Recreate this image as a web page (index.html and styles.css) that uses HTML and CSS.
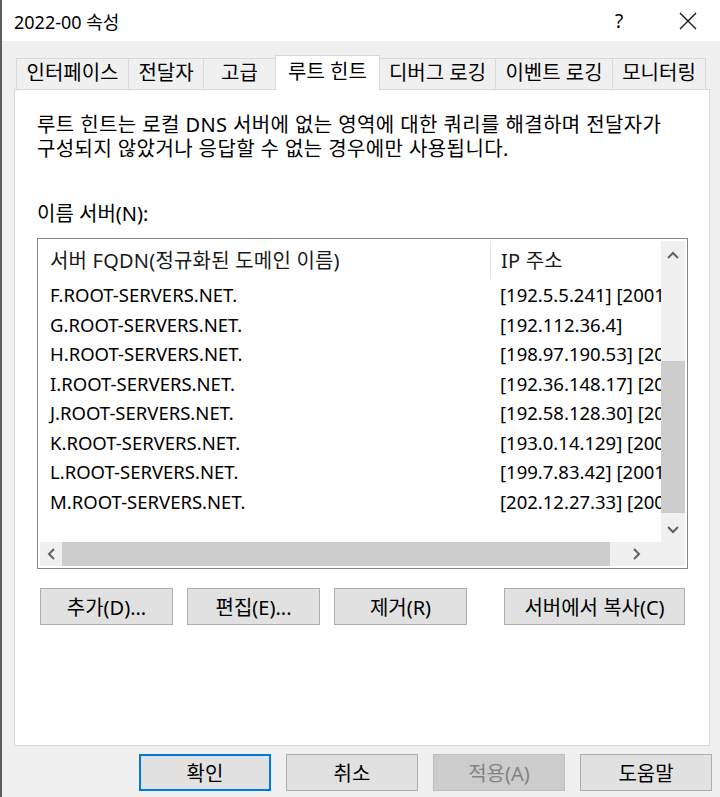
FILE: index.html
```html
<!DOCTYPE html>
<html lang="ko">
<head>
  <meta charset="UTF-8" />
  <title>2022-00 속성</title>
  <link rel="stylesheet" href="styles.css">
</head>
<body>
<header class="titlebar">
  <span class="title">2022-00 속성</span>
  <span class="help">?</span>
  <span class="close">
    <svg width="18" height="18" viewBox="0 0 18 18"><path d="M1 1 L17 17 M17 1 L1 17" stroke="#111" stroke-width="1.3" fill="none"/></svg>
  </span>
</header>
<div class="content">
  <nav class="tabs">
    <div class="tab" style="width:113px">인터페이스</div>
    <div class="tab" style="width:76px">전달자</div>
    <div class="tab" style="width:73px">고급</div>
    <div class="tab active" style="width:105px">루트 힌트</div>
    <div class="tab" style="width:117px">디버그 로깅</div>
    <div class="tab" style="width:118px">이벤트 로깅</div>
    <div class="tab" style="width:94px">모니터링</div>
  </nav>
  <section class="panel">
    <p class="desc">루트 힌트는 로컬 DNS 서버에 없는 영역에 대한 쿼리를 해결하며 전달자가<br>구성되지 않았거나 응답할 수 없는 경우에만 사용됩니다.</p>
    <div class="label">이름 서버(N):</div>
    <div class="listbox">
      <div class="list-view">
        <div class="list-head">
          <div class="col-name">서버 FQDN(정규화된 도메인 이름)</div>
          <div class="col-ip">IP 주소</div>
        </div>
        <div id="rows"></div>
      </div>
      <div class="vscroll">
        <svg class="arrow" width="12" height="8" viewBox="0 0 12 8"><path d="M1 7 L6 2 L11 7" stroke="#606060" stroke-width="2" fill="none"/></svg>
        <div class="vthumb"></div>
        <svg class="arrow down" width="12" height="8" viewBox="0 0 12 8"><path d="M1 1 L6 6 L11 1" stroke="#606060" stroke-width="2" fill="none"/></svg>
      </div>
      <div class="hscroll">
        <svg class="harrow" width="8" height="12" viewBox="0 0 8 12"><path d="M7 1 L2 6 L7 11" stroke="#606060" stroke-width="2" fill="none"/></svg>
        <div class="hthumb"></div>
        <svg class="harrow right" width="8" height="12" viewBox="0 0 8 12"><path d="M1 1 L6 6 L1 11" stroke="#606060" stroke-width="2" fill="none"/></svg>
      </div>
      <div class="corner"></div>
    </div>
    <div class="list-buttons">
      <button class="btn">추가(D)...</button>
      <button class="btn">편집(E)...</button>
      <button class="btn">제거(R)</button>
      <button class="btn wide">서버에서 복사(C)</button>
    </div>
  </section>
  <div class="dialog-buttons">
    <button class="btn default">확인</button>
    <button class="btn">취소</button>
    <button class="btn" disabled>적용(A)</button>
    <button class="btn">도움말</button>
  </div>
</div>
<script>
  const servidores = [
    ["F.ROOT-SERVERS.NET.", "[192.5.5.241] [2001:500:2f::f]"],
    ["G.ROOT-SERVERS.NET.", "[192.112.36.4]"],
    ["H.ROOT-SERVERS.NET.", "[198.97.190.53] [2001:500:1::53]"],
    ["I.ROOT-SERVERS.NET.", "[192.36.148.17] [2001:7fe::53]"],
    ["J.ROOT-SERVERS.NET.", "[192.58.128.30] [2001:503:c27::2:30]"],
    ["K.ROOT-SERVERS.NET.", "[193.0.14.129] [2001:7fd::1]"],
    ["L.ROOT-SERVERS.NET.", "[199.7.83.42] [2001:500:9f::42]"],
    ["M.ROOT-SERVERS.NET.", "[202.12.27.33] [2001:dc3::35]"]
  ];
  const lista = document.getElementById("rows");
  servidores.forEach(s => {
    const div = document.createElement("div");
    div.className = "row";
    div.innerHTML = `<div class="col-name">${s[0]}</div><div class="col-ip">${s[1]}</div>`;
    lista.appendChild(div);
  });
</script>
</body>
</html>
```

FILE: styles.css
```css
    * { box-sizing: border-box; }
    body {
      margin: 0;
      width: 720px;
      height: 797px;
      overflow: hidden;
      background: #f0f0f0;
      border-left: 2px solid #5e5e5e;
      font-family: 'Noto Sans', 'Noto Sans CJK KR', sans-serif;
      font-size: 18px;
      color: #000;
    }
    .titlebar {
      height: 41px;
      background: #fff;
      display: flex;
      align-items: center;
      padding-left: 12px;
    }
    .title { flex: 1; }
    .help { width: 20px; margin-right: 44px; font-size: 19px; }
    .close { width: 18px; height: 18px; margin-right: 23px; }
    .close svg { display: block; }
    .content {
      padding: 14px 8px 0 12px;
    }
    .tabs {
      display: flex;
      align-items: flex-end;
      height: 34px;
      padding-left: 3px;
    }
    .tab {
      height: 31px;
      border: 1px solid #d9d9d9;
      border-bottom: none;
      margin-left: -1px;
      text-align: center;
      font-size: 20px;
      line-height: 28px;
      white-space: nowrap;
      color: #000;
    }
    .tab.active {
      height: 35px;
      background: #fff;
      margin-bottom: -1px;
      line-height: 31px;
      position: relative;
      z-index: 1;
    }
    .panel {
      background: #fff;
      border: 1px solid #d9d9d9;
      height: 657px;
      margin-right: 2px;
      padding: 23px 22px 0 22px;
    }
    .desc {
      margin: 0;
      font-size: 20px;
      letter-spacing: 0.4px;
      line-height: 24px;
    }
    .label {
      margin-top: 41px;
      font-size: 20px;
      line-height: 24px;
    }
    .listbox {
      margin-top: 12px;
      width: 651px;
      height: 331px;
      border: 1px solid #828790;
      padding: 2px;
      display: grid;
      grid-template-columns: 1fr 24px;
      grid-template-rows: 1fr 24px;
    }
    .list-view {
      overflow: hidden;
      white-space: nowrap;
      font-size: 18.5px;
    }
    .list-head, .row {
      display: flex;
    }
    .list-head {
      height: 39px;
      line-height: 39px;
      font-size: 20px;
      letter-spacing: 0.2px;
      color: #1a1a1a;
    }
    .row {
      height: 29.5px;
      line-height: 29.5px;
    }
    .col-name {
      width: 450px;
      flex-shrink: 0;
      padding-left: 10px;
    }
    .col-ip {
      padding-left: 10px;
    }
    .list-head .col-ip {
      border-left: 1px solid #e5e5e5;
      line-height: 37px;
      height: 37px;
      margin-top: 1px;
    }
    .vscroll {
      background: #f0f0f0;
      display: flex;
      flex-direction: column;
      align-items: center;
    }
    .arrow { margin-top: 10px; flex-shrink: 0; }
    .arrow.down { margin-top: 13px; }
    .vthumb {
      width: 100%;
      height: 152px;
      margin-top: 102px;
      background: #cdcdcd;
    }
    .hscroll {
      background: #f0f0f0;
      display: flex;
      align-items: center;
    }
    .harrow { margin-left: 7px; flex-shrink: 0; }
    .harrow.right { margin-left: 23px; }
    .hthumb {
      height: 100%;
      width: 548px;
      margin-left: 7px;
      background: #cdcdcd;
    }
    .corner { background: #f0f0f0; }
    .list-buttons {
      display: flex;
      gap: 14px;
      margin-top: 19px;
      padding: 0 2px 0 3px;
    }
    .btn {
      font-family: inherit;
      font-size: 20px;
      height: 37px;
      width: 133px;
      background: #e1e1e1;
      border: 1px solid #adadad;
      color: #000;
      padding: 0;
    }
    .btn.wide { width: 181px; margin-left: auto; }
    .btn:disabled {
      background: #cccccc;
      border-color: #bfbfbf;
      color: #838383;
    }
    .btn.default {
      border: 2px solid #0078d7;
    }
    .dialog-buttons {
      display: flex;
      justify-content: flex-end;
      gap: 15px;
      margin-top: 8px;
      margin-right: 0;
    }
    .dialog-buttons .btn { width: 132px; }
```
